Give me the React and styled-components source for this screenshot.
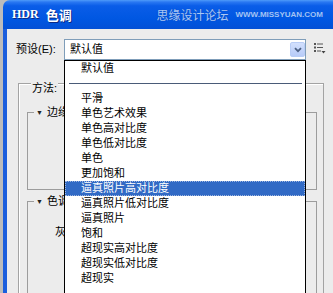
import React from 'react'
import styled, { createGlobalStyle } from 'styled-components';

const GlobalStyle = createGlobalStyle`
  html, body {
    margin: 0;
    padding: 0;
  }
  body {
    font-family: "Liberation Sans", "Noto Sans CJK SC", sans-serif;
    font-size: 11px;
    color: #000;
  }
`;

const presets = [
  '平滑',
  '单色艺术效果',
  '单色高对比度',
  '单色低对比度',
  '单色',
  '更加饱和',
  '逼真照片高对比度',
  '逼真照片低对比度',
  '逼真照片',
  '饱和',
  '超现实高对比度',
  '超现实低对比度',
  '超现实',
];

const ChevronIcon = () => (
  <svg width="8" height="6" viewBox="0 0 8 6">
    <path d="M1 1.2 L4 4.2 L7 1.2" fill="none" stroke="#4d6185" strokeWidth="1.8" />
  </svg>
);

const MenuIcon = () => (
  <svg width="12" height="11" viewBox="0 0 12 11">
    <rect x="0" y="0" width="2" height="2" fill="#555" />
    <rect x="3" y="0.5" width="6" height="1" fill="#555" />
    <rect x="0" y="3.5" width="2" height="2" fill="#555" />
    <rect x="3" y="4" width="6" height="1" fill="#555" />
    <rect x="0" y="7" width="2" height="2" fill="#555" />
    <rect x="3" y="7.5" width="4" height="1" fill="#555" />
    <path d="M7.5 8 L11.5 8 L9.5 10.5 Z" fill="#444" />
  </svg>
);

const App = () => {
  return (
    <Page>
      <GlobalStyle />
      <Window>
        <TitleBar>
          <Title><Latin>HDR</Latin>色调</Title>
          <Watermark>
            <WatermarkCn>思缘设计论坛</WatermarkCn>
            <WatermarkUrl>WWW.MISSYUAN.COM</WatermarkUrl>
          </Watermark>
        </TitleBar>
        <Body>
          <PresetRow>
            <Label>预设(E):</Label>
            <SelectWrap>
              <SelectBox>
                默认值
                <ArrowButton><ChevronIcon /></ArrowButton>
              </SelectBox>
              <DropList>
                <HeaderItem>默认值</HeaderItem>
                <Separator />
                {presets.map((name) => (
                  <ListItem key={name} $active={name === '逼真照片高对比度'}>
                    {name}
                  </ListItem>
                ))}
              </DropList>
            </SelectWrap>
            <MenuButton><MenuIcon /></MenuButton>
          </PresetRow>

          <OuterGroup>
            <OuterLegend>方法:</OuterLegend>
            <InnerGroup $height={78}>
              <InnerLegend><Arrow>▼</Arrow>边缘光</InnerLegend>
            </InnerGroup>
            <InnerGroup $height={140} $gap={11}>
              <InnerLegend><Arrow>▼</Arrow>色调和细节</InnerLegend>
              <FieldLabel>灰度系数:</FieldLabel>
            </InnerGroup>
          </OuterGroup>
        </Body>
      </Window>
    </Page>
  );
};

export default App


const Page = styled.div`
  width: 333px;
  height: 293px;
  overflow: hidden;
  background: #bcbcbc;
  padding-left: 3px;
  box-sizing: border-box;
`;

const Window = styled.div`
  height: 100%;
  display: flex;
  flex-direction: column;
  border-top-left-radius: 7px;
  overflow: hidden;
`;

const TitleBar = styled.div`
  height: 29px;
  flex-shrink: 0;
  display: flex;
  align-items: center;
  padding: 0 10px 0 9px;
  background: linear-gradient(180deg, #4f9bf9 0%, #2a78f2 7%, #0a5de8 20%, #0057e2 65%, #0350d6 100%);
`;

const Title = styled.div`
  color: #fff;
  font-family: "Noto Sans CJK SC", sans-serif;
  font-weight: 700;
  font-size: 13px;
  text-shadow: 1px 1px 0 #0b2a86;
  display: flex;
  align-items: center;
  gap: 7px;
`;

const Latin = styled.span`
  font-family: "Liberation Serif", serif;
  font-size: 12px;
`;

const Watermark = styled.div`
  margin-left: auto;
  display: flex;
  align-items: center;
  gap: 7px;
`;

const WatermarkCn = styled.span`
  font-family: "Noto Sans CJK SC", sans-serif;
  font-size: 12px;
  color: #a9c8f7;
  text-shadow: 0 0 1px #1240a8;
`;

const WatermarkUrl = styled.span`
  font-family: "Liberation Sans", sans-serif;
  font-weight: 700;
  font-size: 8px;
  color: #a3c3f3;
`;

const Body = styled.div`
  flex: 1;
  background: #ececec;
  border-left: 4px solid #1b5edd;
  padding: 10px 0 0 9px;
  display: flex;
  flex-direction: column;
`;

const PresetRow = styled.div`
  display: flex;
  align-items: center;
  height: 21px;
  position: relative;
  z-index: 2;
`;

const Label = styled.div`
  width: 48px;
  line-height: 13px;
`;

const SelectWrap = styled.div`
  position: relative;
  width: 242px;
  height: 21px;
`;

const SelectBox = styled.div`
  height: 100%;
  box-sizing: border-box;
  border: 1px solid #7f9db9;
  background: #fff;
  display: flex;
  align-items: center;
  padding-left: 5px;
  line-height: 13px;
`;

const ArrowButton = styled.div`
  margin-left: auto;
  width: 15px;
  height: 15px;
  box-sizing: border-box;
  border: 1px solid #b9cdf6;
  border-radius: 2px;
  background: linear-gradient(180deg, #d3e0fd 0%, #b7cbf8 100%);
  display: flex;
  align-items: center;
  justify-content: center;
`;

const MenuButton = styled.div`
  margin-left: 8px;
  margin-top: -2px;
  display: flex;
`;

const DropList = styled.div`
  position: absolute;
  top: 21px;
  left: 0;
  width: 242px;
  height: 240px;
  box-sizing: border-box;
  border: 1px solid #000;
  background: #fff;
`;

const HeaderItem = styled.div`
  height: 14px;
  line-height: 14px;
  padding-left: 16px;
`;

const Separator = styled.div`
  height: 1px;
  margin: 8px 3px 7px 4px;
  background: #4a5b78;
`;

const ListItem = styled.div`
  height: 15px;
  line-height: 15px;
  padding-left: 16px;
  background: ${(p) => (p.$active ? '#316ac5' : 'transparent')};
  color: ${(p) => (p.$active ? '#fff' : '#000')};
  outline: ${(p) => (p.$active ? '1px dotted #9fb6e0' : 'none')};
  outline-offset: -1px;
`;

const OuterGroup = styled.div`
  position: relative;
  margin: 23px 0 0 2px;
  width: 306px;
  height: 260px;
  box-sizing: border-box;
  border: 1px solid #a3a3a3;
  box-shadow: inset 1px 1px 0 #fff;
  padding: 28px 6px 0 8px;
  flex-shrink: 0;
`;

const OuterLegend = styled.div`
  position: absolute;
  top: -2px;
  left: 12px;
  padding: 0 1px;
  line-height: 13px;
  background: #ececec;
`;

const InnerGroup = styled.div`
  position: relative;
  height: ${(p) => p.$height}px;
  margin-top: ${(p) => p.$gap || 0}px;
  box-sizing: border-box;
  border: 1px solid #9c9c9c;
  padding: 24px 0 0 27px;
`;

const InnerLegend = styled.div`
  position: absolute;
  top: -7px;
  left: 6px;
  padding: 0 2px;
  line-height: 13px;
  background: #ececec;
  display: flex;
  align-items: center;
`;

const Arrow = styled.span`
  font-size: 7px;
  width: 6px;
  margin-right: 5px;
  color: #222;
`;

const FieldLabel = styled.div`
  line-height: 13px;
`;
